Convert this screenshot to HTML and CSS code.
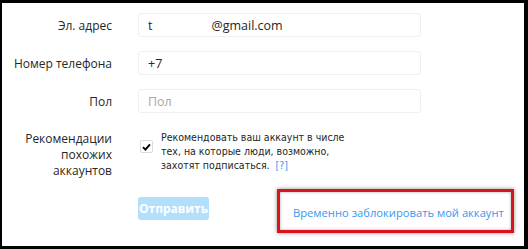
FILE: index.html
```
<!DOCTYPE html>
<html lang="ru">
<head>
<meta charset="utf-8">
<link rel="stylesheet" href="styles.css">
</head>
<body>
<div class="frame">
  <form class="form">
    <div class="row">
      <label class="label">Эл. адрес</label>
      <div class="input"><span class="val">t</span><span class="val gm">@gmail.com</span></div>
    </div>
    <div class="row">
      <label class="label">Номер телефона</label>
      <div class="input"><span class="val">+7</span></div>
    </div>
    <div class="row">
      <label class="label">Пол</label>
      <div class="input"><span class="ph">Пол</span></div>
    </div>
    <div class="row row-rec">
      <label class="label label-multi">Рекомендации<br>похожих<br>аккаунтов</label>
      <div class="check">
        <span class="box"><svg width="9" height="8" viewBox="0 0 9 8"><path d="M1 4.2 L3.4 6.6 L8 1.3" fill="none" stroke="#000" stroke-width="1.9"/></svg></span>
        <span class="check-text">Рекомендовать ваш аккаунт в числе тех, на которые люди, возможно, захотят подписаться. <a class="help">[?]</a></span>
      </div>
    </div>
    <div class="row row-actions">
      <span class="label"></span>
      <div class="actions">
        <button type="button" class="submit">Отправить</button>
        <div class="highlight"><a class="block-link">Временно заблокировать мой аккаунт</a></div>
      </div>
    </div>
  </form>
</div>
</body>
</html>
```
FILE: styles.css
```
html, body {
  margin: 0;
  padding: 0;
  background: #000;
}
.frame {
  margin: 3px 4px 0 2px;
  height: 243px;
  background: #fff;
  font-family: "Open Sans", "Noto Sans", sans-serif;
  color: #262626;
  overflow: hidden;
}
.form {
  display: flex;
  flex-direction: column;
  padding-top: 10px;
}
.row {
  display: grid;
  grid-template-columns: 110px 283px;
  column-gap: 26px;
  align-items: center;
  margin-bottom: 14px;
}
.label {
  text-align: right;
  font-size: 12px;
  color: #262626;
}
.input {
  height: 22px;
  border: 1px solid #efefef;
  border-radius: 3px;
  display: flex;
  align-items: center;
  padding: 0 9px;
  font-size: 12.5px;
  color: #262626;
}
.gm {
  margin-left: 59px;
}
.ph {
  color: #a8a8a8;
}
.row-rec {
  align-items: start;
  margin-top: 3px;
  margin-bottom: 10px;
}
.label-multi {
  line-height: 16px;
  padding-top: 1px;
}
.check {
  display: flex;
  align-items: flex-start;
  padding-left: 2px;
}
.box {
  flex: none;
  width: 11px;
  height: 11px;
  border: 1px solid #dbdbdb;
  border-radius: 2px;
  margin-top: 10px;
  display: flex;
  align-items: center;
  justify-content: center;
}
.check-text {
  margin-left: 8px;
  font-family: "DejaVu Sans Condensed", "DejaVu Sans", Verdana, sans-serif;
  font-stretch: condensed;
  font-size: 10.5px;
  line-height: 14px;
  color: #262626;
  width: 196px;
}
.help {
  color: #3897f0;
  margin-left: 3px;
}
.row-actions {
  align-items: start;
}
.actions {
  display: flex;
  align-items: flex-start;
  width: 400px;
}
.submit {
  margin-top: 8px;
  width: 71px;
  height: 23px;
  border: 0;
  border-radius: 3px;
  background: #b2dffc;
  color: #fff;
  font-family: "Open Sans", sans-serif;
  font-weight: 700;
  font-size: 12px;
  padding: 0;
}
.highlight {
  margin-left: 68px;
  width: 218px;
  height: 36px;
  border: 3px solid #d8141c;
  box-shadow: 0 0 4px rgba(0, 0, 0, 0.45), inset 0 0 3px rgba(0, 0, 0, 0.35);
  display: flex;
  align-items: center;
  padding-left: 13px;
  padding-top: 2px;
  box-sizing: content-box;
}
.block-link {
  color: #3897f0;
  font-size: 11.2px;
  font-weight: 500;
  white-space: nowrap;
}
```
